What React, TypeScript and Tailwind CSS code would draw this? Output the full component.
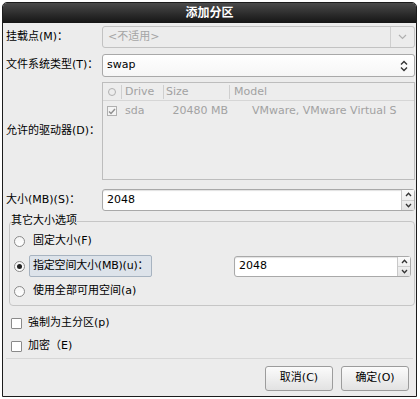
import React from "react";

const font = {
  fontFamily: '"DejaVu Sans", "Noto Sans CJK SC", sans-serif',
};

const ChevronDown = ({ className }: { className?: string }) => (
  <svg width="9" height="6" viewBox="0 0 9 6" className={className}>
    <path d="M1 1 L4.5 4.5 L8 1" fill="none" stroke="currentColor" strokeWidth="1.2" />
  </svg>
);

const UpDown = () => (
  <svg width="8" height="12" viewBox="0 0 8 12" className="text-[#333]">
    <path d="M1 4.5 L4 1.5 L7 4.5" fill="none" stroke="currentColor" strokeWidth="1.4" />
    <path d="M1 7.5 L4 10.5 L7 7.5" fill="none" stroke="currentColor" strokeWidth="1.4" />
  </svg>
);

const SpinInput = ({ value, className }: { value: string; className?: string }) => (
  <div
    className={`flex bg-white border border-[#a9a9a9] rounded-[3px] shadow-[inset_0_1px_1px_rgba(0,0,0,0.12)] ${className ?? ""}`}
  >
    <div className="flex-1 flex items-center pl-[4px] text-[11px] text-black">{value}</div>
    <div className="w-[13px] flex flex-col border-l border-[#c8c8c8] bg-gradient-to-b from-[#fafafa] to-[#e4e4e4]">
      <div className="flex-1 flex items-center justify-center border-b border-[#cfcfcf]">
        <svg width="7" height="5" viewBox="0 0 7 5">
          <path d="M1 4 L3.5 1.2 L6 4" fill="none" stroke="#333" strokeWidth="1.3" />
        </svg>
      </div>
      <div className="flex-1 flex items-center justify-center">
        <svg width="7" height="5" viewBox="0 0 7 5">
          <path d="M1 1 L3.5 3.8 L6 1" fill="none" stroke="#333" strokeWidth="1.3" />
        </svg>
      </div>
    </div>
  </div>
);

const Radio = ({ checked }: { checked?: boolean }) => (
  <span className="w-[11px] h-[11px] rounded-full border border-[#8a8a8a] bg-gradient-to-b from-[#f4f4f4] to-white flex items-center justify-center shrink-0">
    {checked && <span className="w-[5px] h-[5px] rounded-full bg-[#222]" />}
  </span>
);

const Check = () => (
  <span className="w-[11px] h-[11px] border border-[#8a8a8a] bg-white rounded-[1px] shrink-0" />
);

function Label({ children, className }: { children: React.ReactNode; className?: string }) {
  return (
    <div className={`w-[96px] shrink-0 flex items-center whitespace-nowrap text-[11px] text-black ${className ?? ""}`}>
      {children}
    </div>
  );
}

export default function App() {
  return (
    <div className="w-[420px] h-[399px] bg-white pt-[2px] pl-[2px]" style={font}>
      <div className="w-[415px] h-[395px] flex flex-col border border-[#1c1c1c] rounded-t-[5px] bg-[#ececec] overflow-hidden">
        {/* title */}
        <div className="h-[20px] shrink-0 bg-gradient-to-b from-[#4b4b4b] to-[#151515] text-white font-bold text-[12px] flex items-center justify-center">
          添加分区
        </div>

        <div className="flex flex-col pl-[3px] pr-[1px]">
          {/* mount point */}
          <div className="flex mt-[3px] h-[22px]">
            <Label>挂载点(M)：</Label>
            <div className="flex-1 flex border border-[#c2c2c2] rounded-[3px] bg-[#ececec]">
              <div className="flex-1 flex items-center pl-[5px] text-[11px] text-[#a5a5a5]">&lt;不适用&gt;</div>
              <div className="w-[24px] border-l border-[#cfcfcf] flex items-center justify-center text-[#b0b0b0]">
                <ChevronDown />
              </div>
            </div>
          </div>

          {/* fs type */}
          <div className="flex mt-[6px] h-[23px]">
            <Label>文件系统类型(T)：</Label>
            <div className="flex-1 flex border border-[#a9a9a9] rounded-[3px] bg-gradient-to-b from-white to-[#f6f6f6]">
              <div className="flex-1 flex items-center pl-[4px] text-[11px] text-black">swap</div>
              <div className="w-[20px] flex items-center justify-center">
                <UpDown />
              </div>
            </div>
          </div>

          {/* drives */}
          <div className="flex mt-[5px] h-[98px]">
            <Label>允许的驱动器(D)：</Label>
            <div className="flex-1 border border-[#bdbdbd] bg-[#ededed] text-[11px] text-[#a2a2a2] flex flex-col">
              <div className="h-[18px] flex items-center border-b border-[#d6d6d6]">
                <div className="w-[18px] flex justify-center">
                  <span className="w-[8px] h-[8px] rounded-full border border-[#b0b0b0]" />
                </div>
                <div className="w-[42px] border-l border-[#cfcfcf] pl-[3px] leading-[14px]">Drive</div>
                <div className="w-[66px] border-l border-[#cfcfcf] pl-[2px] leading-[14px]">Size</div>
                <div className="flex-1 border-l border-[#cfcfcf] pl-[4px] leading-[14px]">Model</div>
              </div>
              <div className="h-[20px] flex items-center">
                <div className="w-[18px] flex justify-center">
                  <span className="w-[10px] h-[10px] border border-[#b0b0b0] bg-[#f4f4f4] flex items-center justify-center">
                    <svg width="8" height="7" viewBox="0 0 8 7">
                      <path d="M1 3.5 L3 5.5 L7 1" fill="none" stroke="#8f8f8f" strokeWidth="1.4" />
                    </svg>
                  </span>
                </div>
                <div className="w-[43px] pl-[4px]">sda</div>
                <div className="w-[66px] text-right pr-[2px]">20480 MB</div>
                <div className="flex-1 pl-[22px] whitespace-nowrap overflow-hidden">VMware, VMware Virtual S</div>
              </div>
            </div>
          </div>

          {/* size */}
          <div className="flex mt-[9px] h-[22px]">
            <Label>大小(MB)(S)：</Label>
            <SpinInput value="2048" className="flex-1" />
          </div>

          {/* other size options */}
          <fieldset className="mt-[3px] ml-[3px] h-[92px] border border-[#c6c6c6] rounded-[4px] pl-[3px] pr-[3px]">
            <legend className="text-[11px] text-black px-0 -ml-[2px] leading-[14px]">其它大小选项</legend>
            <div className="flex flex-col">
              <div className="flex items-center h-[18px] mt-[4px] gap-[8px] pl-[1px] text-[11px]">
                <Radio />
                <span>固定大小(F)</span>
              </div>
              <div className="flex items-center h-[22px] mt-[5px] pl-[1px] text-[11px]">
                <Radio checked />
                <span className="ml-[4px] h-[22px] flex items-center px-[3px] whitespace-nowrap tracking-[-0.2px] bg-[#dde3ea] border border-[#a7b3c0] rounded-[2px]">
                  指定空间大小(MB)(u)：
                </span>
                <SpinInput value="2048" className="ml-auto w-[177px] h-[21px]" />
              </div>
              <div className="flex items-center h-[18px] mt-[5px] gap-[8px] pl-[1px] text-[11px]">
                <Radio />
                <span>使用全部可用空间(a)</span>
              </div>
            </div>
          </fieldset>

          {/* checkboxes */}
          <div className="flex items-center h-[18px] mt-[8px] ml-[5px] gap-[6px] text-[11px]">
            <Check />
            <span>強制为主分区(p)</span>
          </div>
          <div className="flex items-center h-[18px] mt-[5px] ml-[5px] gap-[6px] text-[11px]">
            <Check />
            <span>加密（E)</span>
          </div>

          <div className="mt-[3px] mr-[2px] border-t border-[#d6d6d6]" />

          {/* buttons */}
          <div className="flex justify-end gap-[8px] mt-[7px] pr-[6px]">
            <button className="w-[68px] h-[25px] border border-[#9c9c9c] rounded-[3px] bg-gradient-to-b from-[#fbfbfb] to-[#e2e2e2] text-[11px] text-black">
              取消(C)
            </button>
            <button className="w-[68px] h-[25px] border border-[#9c9c9c] rounded-[3px] bg-gradient-to-b from-[#fbfbfb] to-[#e2e2e2] text-[11px] text-black">
              确定(O)
            </button>
          </div>
        </div>
      </div>
    </div>
  );
}
